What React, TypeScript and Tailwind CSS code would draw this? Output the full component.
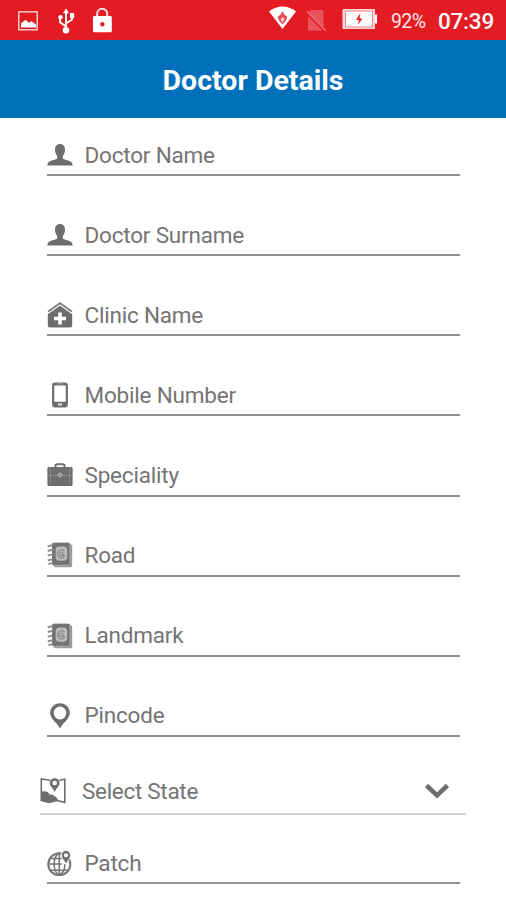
import type { ReactNode } from "react";

const GREY = "#6e6e6e";

function Icon({ children }: { children: ReactNode }) {
  return (
    <svg viewBox="0 0 26 26" className="size-[26px] shrink-0" fill={GREY}>
      {children}
    </svg>
  );
}

const PersonIcon = () => (
  <Icon>
    <path d="M13 2c-3.100 0-5 2.100-5 5.400 0 3 1 5.100 2.200 6.600v2.600c-1 1-4.400 1.600-6.600 2.500C1.200 20 .4 21.300.3 23.500h25.400c-.1-2.200-.9-3.500-3.300-4.400-2.200-.9-5.600-1.500-6.600-2.500V14C17 12.500 18 10.400 18 7.400 18 4.100 16.100 2 13 2z" />
  </Icon>
);

const ClinicIcon = () => (
  <Icon>
    <path d="M1 9.800 13 1.200l12 8.600" fill="none" stroke="#808080" strokeWidth="1.900" />
    <path d="M.8 12.300 13 3.800l12.200 8.500v11c0 1.400-.8 2.200-2.200 2.200H3c-1.400 0-2.200-.8-2.200-2.200z" />
    <path d="M11.200 10.500h3.600v4.200h4.200v3.500h-4.200v4.200h-3.600v-4.200H7v-3.500h4.200z" fill="#fff" />
  </Icon>
);

const PhoneIcon = () => (
  <Icon>
    <path fillRule="evenodd" d="M7.800.600h10.400c1.700 0 2.700 1 2.700 2.700v19.400c0 1.700-1 2.700-2.700 2.700H7.800c-1.700 0-2.700-1-2.700-2.700V3.300c0-1.700 1-2.700 2.700-2.700zM7.300 3.500v16.300h11.400V3.500z" />
    <path d="M11 21.400h4v2h-4z" fill="#ddd" />
    <path d="M10 1.900h6" stroke="#aaa" strokeWidth=".8" />
  </Icon>
);

const BriefcaseIcon = () => (
  <Icon>
    <path d="M8.500 5V4c0-1.200.6-1.800 1.800-1.800h5.400c1.200 0 1.800.6 1.800 1.800v1" fill="none" stroke={GREY} strokeWidth="2" />
    <rect x=".4" y="5" width="25.200" height="19" rx="1.500" />
    <path d="M1 13.400h24M3.500 5.300v18M22.500 5.300v18" stroke="#929292" strokeWidth=".8" fill="none" />
    <path d="m13 10.300 2.700 2.500-2.700 3.500-2.700-3.500z" fill="#b6b6b6" />
    <path d="M13 11.800v3" stroke="#707070" strokeWidth="1" />
  </Icon>
);

const AddressBookIcon = () => (
  <Icon>
    <path d="M6.500.7H22l3.200 2.800V23c0 1.500-.7 2.300-2.200 2.300H7.800L5.500 22.600z" fill="#989898" />
    <rect x="5" y=".7" width="17.500" height="22" rx="1.500" fill="#747474" />
    <path d="M7.500 23.600H22M23.300 3v20" stroke="#b0b0b0" strokeWidth=".8" />
    <rect x="8.700" y="4.600" width="11.500" height="14.200" rx="4" fill="#bcbcbc" />
    <path d="M17.400 9a4 4 0 1 0-.2 6M16.200 11.800a1.800 1.800 0 1 0-3.600 0 1.800 1.800 0 0 0 3.600 0v1.200c0 1.200 1.800 1.200 2-.2" fill="none" stroke="#888" strokeWidth="1.100" />
    <path d="M.7 4.300 6 3M.7 9 6 7.700M.7 13.700 6 12.400M.7 18.400 6 17.100M1.300 21.900l5-.8" fill="none" stroke="#8a8a8a" strokeWidth="1.900" />
  </Icon>
);

const PinIcon = () => (
  <Icon>
    <path fillRule="evenodd" d="M13 .3c-5.400 0-9.800 4.200-9.800 9.400 0 5.800 5.600 8.800 9.800 15.500 4.200-6.700 9.800-9.700 9.800-15.500 0-5.200-4.400-9.400-9.800-9.400zm0 3.200a6.300 6.500 0 1 1 0 13 6.300 6.500 0 0 1 0-13z" />
  </Icon>
);

const MapIcon = () => (
  <Icon>
    <path d="M10 2.200 1.300 1v21.500l7.700 2 8-2 7.800 1.900V1.200l-5.300 1.100" fill="none" stroke={GREY} strokeWidth="1.600" />
    <path d="M1 14c3.500-1.600 7.500-.3 8.500 2.500 3-.5 5 1.300 7.200 3.300.9.800 1.200 1.700.7 2.600L9 24.800l-8-2z" />
    <path fillRule="evenodd" d="M14.700.3c-3 0-4.900 2-4.900 4.600 0 3.200 3.500 5 4.900 9.300 1.400-4.300 4.900-6.100 4.900-9.300 0-2.600-1.900-4.600-4.900-4.600zm0 2.400a2.300 2.300 0 1 1 0 4.600 2.300 2.300 0 0 1 0-4.600z" />
  </Icon>
);

const GlobeIcon = () => (
  <Icon>
    <circle cx="12.300" cy="14.200" r="11" fill="none" stroke="#777" strokeWidth="2.100" />
    <path d="M1 14h14M3.200 8.500h13M3.200 20.200h18.500M12.300 3v22.500M12 3C5.500 7.500 5.500 21 12 25.200M12.600 25.200c4-2.700 5.500-7 5.200-11.200" fill="none" stroke="#777" strokeWidth="1.600" />
    <path d="M14.400 5.500c0-3 1.800-5.200 4.600-5.200s4.600 2.200 4.600 5.200c0 3.500-3.200 5-4.600 9.300-1.400-4.300-4.600-5.800-4.600-9.300z" stroke="#fff" strokeWidth="1" />
    <circle cx="19" cy="5.300" r="2.100" fill="#fff" />
  </Icon>
);

const FIELDS = [
  { label: "Doctor Name", icon: <PersonIcon /> },
  { label: "Doctor Surname", icon: <PersonIcon /> },
  { label: "Clinic Name", icon: <ClinicIcon /> },
  { label: "Mobile Number", icon: <PhoneIcon /> },
  { label: "Speciality", icon: <BriefcaseIcon /> },
  { label: "Road", icon: <AddressBookIcon /> },
  { label: "Landmark", icon: <AddressBookIcon /> },
  { label: "Pincode", icon: <PinIcon /> },
];

function Field({ label, icon }: { label: string; icon: ReactNode }) {
  return (
    <div className="flex h-[42px] items-center gap-3 border-b-2 border-[#909090] pt-[1.500px]">
      {icon}
      <span>{label}</span>
    </div>
  );
}

function StatusBar() {
  return (
    <header className="flex h-10 items-center bg-[#e31b23] text-white">
      <svg viewBox="0 0 130 40" className="h-10 w-[130px]" fill="#fff">
        <rect x="18.800" y="11.800" width="18.400" height="18" fill="none" stroke="#ffc9c9" strokeWidth="1.500" />
        <path d="M21 27.500v-4l4.500-3.700 3.500 3 2.500-1.500 4.500 3.200v3z" />
        <path d="M66 12v17M66 26.500l-6-4.300v-4M66 23.500l6-4v-4" fill="none" stroke="#fff" strokeWidth="1.900" />
        <path d="m66 8.500 3 4.800h-6zM70 13h4.200v5H70z" />
        <circle cx="60.500" cy="17.300" r="2.200" />
        <circle cx="66" cy="30.300" r="3.300" />
        <path d="M97.200 17v-3.200a5 5 0 0 1 10 0V17" fill="none" stroke="#ffe0e0" strokeWidth="2" />
        <path fillRule="evenodd" d="M94.500 16h15.800c1 0 1.500.6 1.500 1.500v13.300c0 1-.6 1.500-1.500 1.500H94.500c-1 0-1.500-.6-1.500-1.500V17.500c0-1 .6-1.500 1.500-1.500zm7.900 6a2.200 2.200 0 1 0 0 4.400 2.200 2.200 0 0 0 0-4.400z" />
      </svg>
      <svg viewBox="0 0 120 40" className="ml-auto h-10 w-[120px]" fill="#fff">
        <path d="M3 11.500Q16.500 1.500 30 11.500L16.500 29z" />
        <path d="m16.500 11 1.800 3.500 3 2.300-1.500 4-3.300 3.700-3.300-3.700-1.500-4 3-2.300z" fill="#e34a50" />
        <path d="m16.500 17 2 2.500-2 3-2-3z" fill="#ffd0d0" />
        <path d="M45.500 10H56c1 0 1.500.6 1.500 1.500v18c0 1-.5 1.300-1.500 1.300H43.500c-1 0-1.500-.4-1.500-1.300V13.500z" fill="#ea525b" />
        <path d="m41 13 18 18" stroke="#e31b23" strokeWidth="3" />
        <path d="m41 11.500 18.500 19" stroke="#f07079" strokeWidth="1.400" />
        <rect x="76.500" y="9" width="32.500" height="20" rx="1" fill="#ffd9d9" />
        <rect x="79.500" y="11" width="27" height="16" fill="#fff" stroke="#ef7b80" strokeWidth=".9" />
        <path d="M109 14.500h2v9h-2z" />
        <path d="m94.500 13-4.500 7h3l-1.200 5 4.700-6.500h-3z" fill="#e31b23" />
      </svg>
      <span className="ml-[5px] w-[47px] pt-[3px] text-[19.500px] tracking-[-0.500px] text-[#ffe5e5]">92%</span>
      <span className="mr-3 pt-[3px] text-[22.500px] font-medium">07:39</span>
    </header>
  );
}

export default function App() {
  return (
    <div className="flex h-[900px] w-[506px] flex-col overflow-hidden bg-white font-['Roboto',sans-serif] text-[22.500px] leading-none tracking-[-0.2px] text-[#747474]">
      <StatusBar />
      <div className="flex h-[78px] items-center justify-center bg-[#0070bb] pt-[5px]">
        <h1 className="text-[28.500px] font-bold tracking-normal text-white">Doctor Details</h1>
      </div>
      <main className="flex flex-col">
        <div className="flex flex-col gap-[38.140px] px-[46.500px] pt-4">
          {FIELDS.map((field) => (
            <Field key={field.label} {...field} />
          ))}
        </div>
        <div className="mx-10 mt-[31px] flex h-[47.500px] items-center gap-4 border-b-2 border-[#d0d0d0] pt-px">
          <MapIcon />
          <span className="tracking-[-0.3px]">Select State</span>
          <svg viewBox="0 0 26 18" className="mr-4 ml-auto h-[18px] w-[26px]">
            <path d="m2.500 3.500 10.500 10 10.500-10" fill="none" stroke="#6e6e6e" strokeWidth="4.500" />
          </svg>
        </div>
        <div className="mt-[27px] px-[46.500px]">
          <Field label="Patch" icon={<GlobeIcon />} />
        </div>
      </main>
    </div>
  );
}
